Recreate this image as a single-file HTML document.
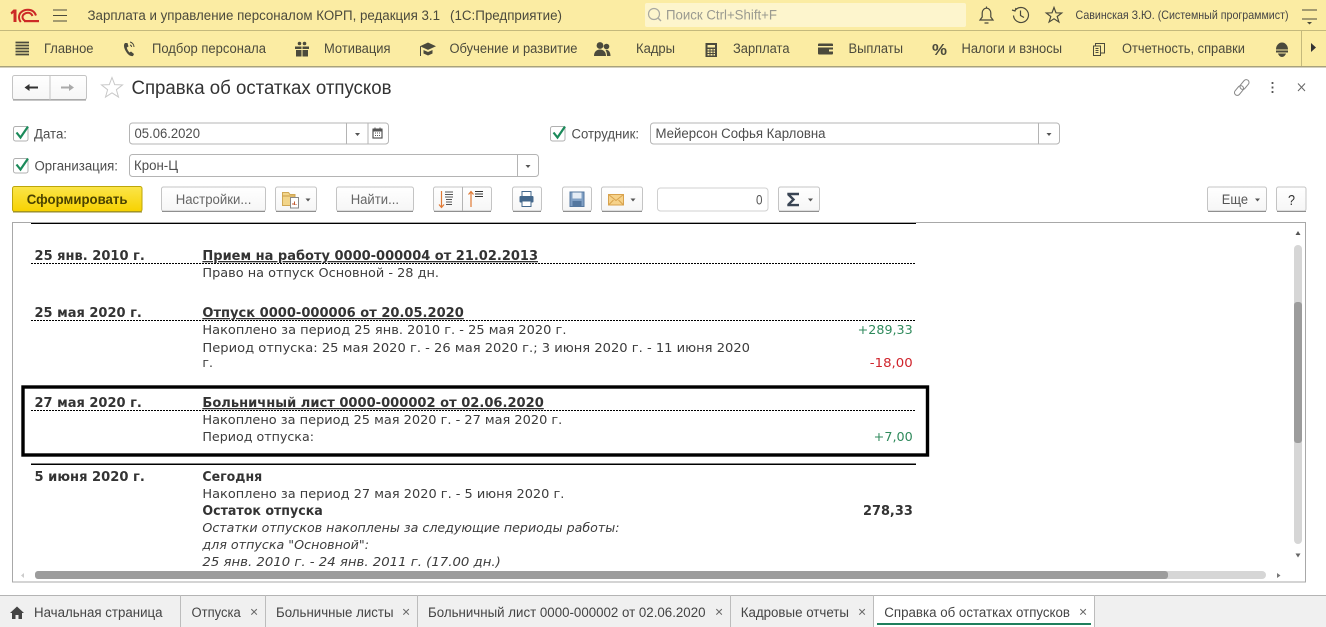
<!DOCTYPE html>
<html lang="ru">
<head>
<meta charset="utf-8">
<title>Справка об остатках отпусков</title>
<style>
html,body{margin:0;padding:0;background:#fff;width:1326px;height:627px;overflow:hidden}
svg{display:block}
text{font-family:"Liberation Sans",sans-serif;font-size:13px;fill:#4a4a40}
.m{font-size:13.5px;fill:#4b4a3c}
.c{font-size:13.5px;fill:#4d4d4d}
.r{font-family:"DejaVu Sans",sans-serif;font-size:12.5px;fill:#3c3c3c}
.b{font-family:"DejaVu Sans",sans-serif;font-size:13px;font-weight:bold;fill:#333}
.u{text-decoration:underline}
.i{font-style:italic}
.t{font-size:13.5px;fill:#444}
.x{font-size:14px;fill:#666}
.btn{fill:url(#g);stroke:#c4c4c4;stroke-width:1}
.sh{stroke:#8f8f8f;stroke-width:1;fill:none}
.fld{fill:#fff;stroke:#b4b4b4;stroke-width:1}
.sep{stroke:#b4b4b4;stroke-width:1}
.dot{stroke:#000;stroke-width:1;stroke-dasharray:2 1;fill:none}
.ar{fill:#555}
.ic{fill:none;stroke:#4b4a3c;stroke-width:1.2}
.if{fill:#4b4a3c}
</style>
</head>
<body>
<svg xmlns="http://www.w3.org/2000/svg" width="1326" height="627" viewBox="0 0 1326 627">
<defs>
<linearGradient id="g" x1="0" y1="0" x2="0" y2="1"><stop offset="0" stop-color="#fff"/><stop offset="1" stop-color="#f6f6f6"/></linearGradient>
<linearGradient id="y" x1="0" y1="0" x2="0" y2="1"><stop offset="0" stop-color="#fbe54a"/><stop offset="1" stop-color="#f7d200"/></linearGradient>
<clipPath id="rep"><rect x="13" y="223" width="1292" height="348"/></clipPath>
</defs>

<!-- top bar -->
<rect x="0" y="0" width="1326" height="30" fill="#fbeca3"/>
<rect x="0" y="30" width="1326" height="1" fill="#c4b97c"/>
<rect x="0" y="31" width="1326" height="35" fill="#fbeca3"/>
<rect x="0" y="66" width="1326" height="1.5" fill="#a8a27c"/>

<!-- 1C logo -->
<path d="M10.500 12.500l3-3h3V22h-3V13l-2 1.500z" fill="#cc2a26"/>
<path d="M36 15.500C34.500 11.500 31.500 9.800 28 9.800c-5 0-9 3-9 7.200 0 1.800.6 3.600 1.800 5M32.500 16C31.500 13.800 30 12.800 28 12.800c-3 0-5.500 1.900-5.500 4.200 0 1.800 1 3 2.500 3.800" fill="none" stroke="#cc2a26" stroke-width="2"/>
<rect x="24" y="20" width="15" height="2.200" fill="#cc2a26"/>
<path d="M53 10h14M53 15.500h14M53 21h14" stroke="#4b4a3c" stroke-width="1.100" fill="none"/>
<text class="m" x="87.500" y="20" textLength="352.500" lengthAdjust="spacingAndGlyphs">Зарплата и управление персоналом КОРП, редакция 3.1</text>
<text class="m" x="450" y="20" textLength="112" lengthAdjust="spacingAndGlyphs">(1С:Предприятие)</text>

<!-- search -->
<rect x="645" y="3" width="321" height="24" rx="2" fill="#fdf5cd"/>
<circle cx="654" cy="14" r="5.500" fill="none" stroke="#a9a9a0" stroke-width="1.200"/>
<path d="M658 18l3 3" stroke="#a9a9a0" stroke-width="1.400"/>
<text x="666" y="19.500" textLength="111" lengthAdjust="spacingAndGlyphs" style="font-size:13.5px;fill:#9a9a90">Поиск Ctrl+Shift+F</text>

<!-- bell, history, star -->
<path class="ic" d="M980 20h13l-2.200-3V13c0-2.600-1.900-4.800-4.300-4.800S982.200 10.400 982.200 13v4zM986.500 8.200V6.500M984.500 23h4"/>
<path class="ic" d="M1015 10.500a7.500 7.500 0 1 1-1.500 5M1012 10l3 1 1-3M1020.500 10.500V15.500l3.500 2"/>
<path class="ic" d="M1054 7.500l2 5.300 5.700.2-4.500 3.500 1.700 5.500-4.900-3.200-4.900 3.200 1.700-5.500-4.500-3.500 5.700-.2z"/>
<text x="1075.500" y="19" textLength="213" lengthAdjust="spacingAndGlyphs" style="font-size:12px;fill:#444">Савинская З.Ю. (Системный программист)</text>
<path d="M1302 10h15M1302 19h15" stroke="#4b4a3c" stroke-width="1.100" fill="none"/>
<path d="M1307 22h5l-2.500 2.500z" fill="#4b4a3c"/>

<!-- menu bar -->
<path d="M15.500 42.500h13.500M15.500 45.500h13.500M15.500 48.500h13.500M15.500 51.500h13.500M15.500 54.500h13.500" stroke="#4b4a3c" stroke-width="1.800" fill="none"/>
<text class="m" x="44" y="53" textLength="49.500" lengthAdjust="spacingAndGlyphs">Главное</text>
<path d="M125 43c-2 2-1 6 2 10 2 2.500 4 3.500 6 3l1-2-3-2.500-1.500 1c-1.500-1.500-2.500-3.500-2.700-5l1.700-1-1-3.500z" class="if"/>
<path d="M130 42a5 5 0 0 1 4 5M130 45a2 2 0 0 1 1.500 2" fill="none" stroke="#4b4a3c" stroke-width="1"/>
<text class="m" x="152" y="53" textLength="114" lengthAdjust="spacingAndGlyphs">Подбор персонала</text>
<path class="if" d="M295 46.500h6.500V49H295zM302.500 46.500h6.500V49h-6.500zM296 50h5.500v6.500H296zM302.500 50H308v6.500h-5.500z"/>
<circle cx="299.500" cy="43.500" r="1.800" class="if"/><circle cx="304.500" cy="43.500" r="1.800" class="if"/>
<text class="m" x="324" y="53" textLength="66.500" lengthAdjust="spacingAndGlyphs">Мотивация</text>
<path class="if" d="M428 42.500l8 3.700-8 3.700-8-3.700zM423.500 50l4.500 2 4.500-2v3.500l-4.500 2-4.500-2z"/>
<path d="M420.500 46.500v9.500" stroke="#4b4a3c" stroke-width="1"/>
<text class="m" x="449.500" y="53" textLength="128" lengthAdjust="spacingAndGlyphs">Обучение и развитие</text>
<circle cx="600" cy="45.500" r="3.400" class="if"/><circle cx="606.500" cy="46.500" r="2.800" class="if"/>
<path class="if" d="M594 56c0-4 2.500-6.500 6-6.500s6 2.500 6 6.500zM607 56c0-2.500-.5-4.500-1.500-6 3-.8 5 2 5 6z"/>
<text class="m" x="636" y="53" textLength="39" lengthAdjust="spacingAndGlyphs">Кадры</text>
<rect x="705.500" y="43" width="11.500" height="14" class="if"/>
<rect x="707.500" y="45" width="7.500" height="2.500" fill="#fbeca3"/>
<path d="M707.500 49h2v1.500h-2zM710.500 49h2v1.500h-2zM713.500 49h1.500v1.500h-1.500zM707.500 51.500h2V53h-2zM710.500 51.500h2V53h-2zM713.500 51.500h1.500V53h-1.500zM707.500 54h2v1.500h-2zM710.500 54h2v1.500h-2zM713.500 54h1.500v1.500h-1.500z" fill="#fbeca3"/>
<text class="m" x="733" y="53" textLength="56.500" lengthAdjust="spacingAndGlyphs">Зарплата</text>
<rect x="818" y="43.500" width="15" height="11" rx="1" class="if"/>
<rect x="818" y="46" width="15" height="1.500" fill="#fbeca3"/>
<rect x="829" y="49.500" width="4" height="2" fill="#fbeca3"/>
<text class="m" x="848.500" y="53" textLength="54.500" lengthAdjust="spacingAndGlyphs">Выплаты</text>
<text x="932" y="55" style="font-size:16px;font-weight:bold;fill:#4b4a3c" textLength="15" lengthAdjust="spacingAndGlyphs">%</text>
<text class="m" x="961.500" y="53" textLength="100.500" lengthAdjust="spacingAndGlyphs">Налоги и взносы</text>
<path class="ic" d="M1093.500 46h7v9.500h-7zM1095.500 46V43.500h9v9.500h-4M1095.500 48.500h3M1095.500 50.500h3M1095.500 52.500h3" style="stroke-width:1"/>
<text class="m" x="1122" y="53" textLength="123" lengthAdjust="spacingAndGlyphs">Отчетность, справки</text>
<path class="if" d="M1276 49.500c0-3.800 2.500-7 6-7s6 3.200 6 7zM1276 50.500h12v2h-12zM1278 53.500h8c-.7 2-2.200 3.500-4 3.500s-3.300-1.500-4-3.500z"/>
<rect x="1301" y="31" width="1" height="35" fill="#c4b97c"/>
<path d="M1311 43l5 4.500-5 4.500z" fill="#333"/>

<!-- title row -->
<rect x="12.500" y="75.500" width="74" height="24" rx="2" class="btn"/>
<path class="sh" d="M13 100h73"/>
<rect x="49.500" y="76" width="1" height="24" fill="#c4c4c4"/>
<path d="M24.500 87.500l5-3.500v2.500H38v2h-8.500V91z" fill="#333"/>
<path d="M74 87.500l-5-3.500v2.500H61v2h8V91z" fill="#aaa"/>
<path d="M112 77.500l2.700 7.100 7.800.3-6.100 4.800 2.100 7.400-6.500-4.300-6.500 4.300 2.100-7.400-6.100-4.800 7.800-.3z" fill="none" stroke="#c8c8c8" stroke-width="1"/>
<text x="131.500" y="94" textLength="260" lengthAdjust="spacingAndGlyphs" style="font-size:19px;fill:#333">Справка об остатках отпусков</text>
<g fill="none" stroke="#888" stroke-width="1">
<rect x="-5.500" y="-2.800" width="11" height="5.600" rx="2.800" transform="translate(1244.500 84.500) rotate(-50)"/>
<rect x="-5.500" y="-2.800" width="11" height="5.600" rx="2.800" transform="translate(1239 90.500) rotate(-50)"/>
</g>
<path d="M1272.500 82v2M1272.500 86.500v2M1272.500 91v2" stroke="#555" stroke-width="1.800" fill="none"/>
<path d="M1298 83.500l7 7.500M1305 83.500l-7 7.500" stroke="#666" stroke-width="1"/>

<!-- filter form -->
<rect x="13.500" y="126.500" width="14.500" height="14.500" rx="2" fill="#fff" stroke="#b0b0b0"/>
<path d="M16.500 132.500l4 5 7.500-11" fill="none" stroke="#1b8a5a" stroke-width="2.200"/>
<text class="c" x="34" y="138.500" textLength="33" lengthAdjust="spacingAndGlyphs">Дата:</text>
<rect x="129.500" y="123" width="259" height="21" rx="3" class="fld"/>
<path class="sep" d="M346.500 123v21M368 123v21"/>
<text class="c" x="134.500" y="138" textLength="65.500" lengthAdjust="spacingAndGlyphs">05.06.2020</text>
<path class="ar" d="M355 133h5l-2.500 3z"/>
<rect x="373" y="130" width="9" height="8" fill="none" stroke="#555" stroke-width="1.200"/>
<path d="M373 129h9v2h-9zM375 127.500v2M380 127.500v2M375 133h1M377 133h1M379 133h1M375 135.500h1M377 135.500h1M379 135.500h1" stroke="#555" fill="none" stroke-width="1"/>

<rect x="550.500" y="126.500" width="14.500" height="14.500" rx="2" fill="#fff" stroke="#b0b0b0"/>
<path d="M553.500 132.500l4 5 7.500-11" fill="none" stroke="#1b8a5a" stroke-width="2.200"/>
<text class="c" x="571.500" y="138.500" textLength="67.500" lengthAdjust="spacingAndGlyphs">Сотрудник:</text>
<rect x="650.500" y="123" width="409" height="21" rx="3" class="fld"/>
<path class="sep" d="M1038.500 123v21"/>
<text class="c" x="655.500" y="138" textLength="170" lengthAdjust="spacingAndGlyphs">Мейерсон Софья Карловна</text>
<path class="ar" d="M1046.500 133h5l-2.500 3z"/>

<rect x="13.500" y="158.500" width="14.500" height="14.500" rx="2" fill="#fff" stroke="#b0b0b0"/>
<path d="M16.500 164.500l4 5 7.500-11" fill="none" stroke="#1b8a5a" stroke-width="2.200"/>
<text class="c" x="34.500" y="170.500" textLength="83.500" lengthAdjust="spacingAndGlyphs">Организация:</text>
<rect x="129.500" y="154.500" width="409" height="22" rx="3" class="fld"/>
<path class="sep" d="M517.500 155v21"/>
<text class="c" x="134" y="170" textLength="44" lengthAdjust="spacingAndGlyphs">Крон-Ц</text>
<path class="ar" d="M525.500 165h5l-2.500 3z"/>

<!-- command bar -->
<rect x="12.500" y="186.500" width="129.500" height="25" rx="2" fill="url(#y)" stroke="#bda60a"/>
<path d="M13 212h129" stroke="#8f8730"/>
<text x="26.800" y="204" textLength="100.700" lengthAdjust="spacingAndGlyphs" style="font-size:13.500px;font-weight:bold;fill:#4a4200">Сформировать</text>

<rect x="161.500" y="187" width="104" height="24" rx="2" class="btn"/><path class="sh" d="M162 211.500h103"/>
<text class="c" x="175.700" y="204" textLength="75.700" lengthAdjust="spacingAndGlyphs" style="fill:#666">Настройки...</text>

<rect x="275.500" y="187" width="41" height="24" rx="2" class="btn"/><path class="sh" d="M276 211.500h40"/>
<path d="M282.500 192.500h6l1.500 2h5v11h-12.500z" fill="#f2d58a" stroke="#d0a855"/>
<path d="M282.500 196h12.500" stroke="#c99a45"/>
<rect x="290.500" y="197.500" width="8" height="10.500" fill="#fff" stroke="#888"/>
<path d="M293 205v-2M294.500 205v-3.500M296 205v-1" stroke="#c05a30"/>
<path class="ar" d="M305.500 198.500h5l-2.500 3z"/>

<rect x="336.500" y="187" width="77" height="24" rx="2" class="btn"/><path class="sh" d="M337 211.500h76"/>
<text class="c" x="350.700" y="204" textLength="48.300" lengthAdjust="spacingAndGlyphs" style="fill:#666">Найти...</text>

<rect x="433.500" y="187" width="58" height="24" rx="2" class="btn"/><path class="sh" d="M434 211.500h57"/>
<path class="sep" d="M462.500 187v24"/>
<path d="M441.500 191v16M439 204.500l2.500 3 2.500-3" fill="none" stroke="#e07a35" stroke-width="1.200"/>
<path d="M445 192h8M445 194.500h8M445 197h8M446 199.500h6M446 202h6M446 204.500h6" stroke="#555" stroke-width="1"/>
<path d="M471 207v-15M468.500 194.500l2.500-3 2.500 3" fill="none" stroke="#e07a35" stroke-width="1.200"/>
<path d="M475 191.500h8M475 194h8M475 196.500h8" stroke="#333" stroke-width="1"/>

<rect x="512.500" y="187" width="29" height="24" rx="2" class="btn"/><path class="sh" d="M513 211.500h28"/>
<rect x="522" y="191.500" width="9" height="5" fill="#fff" stroke="#44688c"/>
<rect x="519.500" y="196" width="14" height="6.500" rx="1" fill="#44688c"/>
<rect x="522" y="201" width="9" height="5.500" fill="#fff" stroke="#44688c"/>

<rect x="562.500" y="187" width="29" height="24" rx="2" class="btn"/><path class="sh" d="M563 211.500h28"/>
<rect x="570" y="192" width="14" height="14.500" fill="#7f9fc4" stroke="#54779f"/>
<rect x="572.500" y="192.500" width="9" height="6" fill="#e4ecf5"/>
<rect x="572.500" y="201" width="9" height="5.500" fill="#54779f"/>

<rect x="601.500" y="187" width="41" height="24" rx="2" class="btn"/><path class="sh" d="M602 211.500h40"/>
<rect x="608.500" y="194.500" width="15" height="10.500" fill="#f6d28a" stroke="#d8a24d"/>
<path d="M608.500 194.500l7.500 6 7.500-6M608.500 205l5-5M623.500 205l-5-5" fill="none" stroke="#d8a24d"/>
<path class="ar" d="M630.500 198.500h5l-2.500 3z"/>

<rect x="657.500" y="188" width="110.500" height="23" rx="3" fill="#fff" stroke="#d0d0d0"/>
<text x="756" y="204.500" textLength="6.500" lengthAdjust="spacingAndGlyphs" style="font-size:14px;fill:#555">0</text>

<rect x="778.500" y="187" width="41" height="24" rx="2" class="btn"/><path class="sh" d="M779 211.500h40"/>
<path d="M799 194h-10.500v.6l5 4.900-5 5v.6H799" fill="none" stroke="#3a4554" stroke-width="2.400"/>
<path class="ar" d="M808 198.500h5l-2.500 3z"/>

<rect x="1207.500" y="187" width="59" height="24" rx="2" class="btn"/><path class="sh" d="M1208 211.500h58"/>
<text class="c" x="1221.800" y="204" textLength="26.200" lengthAdjust="spacingAndGlyphs" style="fill:#555">Еще</text>
<path class="ar" d="M1255 198.500h5l-2.500 3z"/>
<rect x="1276.500" y="187" width="29.500" height="24" rx="2" class="btn"/><path class="sh" d="M1277 211.500h29"/>
<text x="1288" y="205" textLength="7" lengthAdjust="spacingAndGlyphs" style="font-size:15px;fill:#333">?</text>

<!-- report frame -->
<rect x="12.500" y="222.500" width="1293" height="359.500" fill="#fff" stroke="#a8a8a8"/>
<g clip-path="url(#rep)">
<rect x="31" y="222" width="885" height="2" fill="#000"/>

<text class="b" x="34.500" y="260" textLength="110.300" lengthAdjust="spacingAndGlyphs">25 янв. 2010 г.</text>
<text class="b u" x="202.400" y="260" textLength="335.600" lengthAdjust="spacingAndGlyphs">Прием на работу 0000-000004 от 21.02.2013</text>
<path class="dot" d="M31 263.500h885"/>
<text class="r" x="202.400" y="277" textLength="236.600" lengthAdjust="spacingAndGlyphs">Право на отпуск Основной - 28 дн.</text>

<text class="b" x="34.500" y="317" textLength="107.300" lengthAdjust="spacingAndGlyphs">25 мая 2020 г.</text>
<text class="b u" x="202.400" y="317" textLength="261.400" lengthAdjust="spacingAndGlyphs">Отпуск 0000-000006 от 20.05.2020</text>
<path class="dot" d="M31 320.500h885"/>
<text class="r" x="202.400" y="334" textLength="364.100" lengthAdjust="spacingAndGlyphs">Накоплено за период 25 янв. 2010 г. - 25 мая 2020 г.</text>
<text class="r" x="857.700" y="334" textLength="55" lengthAdjust="spacingAndGlyphs" style="fill:#2f8a5c">+289,33</text>
<text class="r" x="202.400" y="352" textLength="547.600" lengthAdjust="spacingAndGlyphs">Период отпуска: 25 мая 2020 г. - 26 мая 2020 г.; 3 июня 2020 г. - 11 июня 2020</text>
<text class="r" x="202.400" y="367">г.</text>
<text class="r" x="869.800" y="367" textLength="42.900" lengthAdjust="spacingAndGlyphs" style="fill:#d0242c">-18,00</text>

<text class="b" x="34.500" y="407" textLength="107.300" lengthAdjust="spacingAndGlyphs">27 мая 2020 г.</text>
<text class="b u" x="202.400" y="407" textLength="341.400" lengthAdjust="spacingAndGlyphs">Больничный лист 0000-000002 от 02.06.2020</text>
<path class="dot" d="M31 410.500h885"/>
<text class="r" x="202.400" y="424" textLength="359.900" lengthAdjust="spacingAndGlyphs">Накоплено за период 25 мая 2020 г. - 27 мая 2020 г.</text>
<text class="r" x="202.400" y="441" textLength="111.600" lengthAdjust="spacingAndGlyphs">Период отпуска:</text>
<text class="r" x="873.700" y="441" textLength="39.100" lengthAdjust="spacingAndGlyphs" style="fill:#2f8a5c">+7,00</text>
<rect x="23" y="387" width="904.500" height="68" fill="none" stroke="#000" stroke-width="3.400"/>

<rect x="31" y="463.500" width="885" height="1.500" fill="#000"/>
<text class="b" x="34.500" y="481" textLength="110.300" lengthAdjust="spacingAndGlyphs">5 июня 2020 г.</text>
<text class="b" x="202.400" y="481" textLength="59.800" lengthAdjust="spacingAndGlyphs">Сегодня</text>
<text class="r" x="202.400" y="498" textLength="362" lengthAdjust="spacingAndGlyphs">Накоплено за период 27 мая 2020 г. - 5 июня 2020 г.</text>
<text class="b" x="202.400" y="515" textLength="120.400" lengthAdjust="spacingAndGlyphs">Остаток отпуска</text>
<text class="b" x="863" y="515" textLength="49.800" lengthAdjust="spacingAndGlyphs">278,33</text>
<text class="r i" x="202.400" y="532" textLength="417.100" lengthAdjust="spacingAndGlyphs">Остатки отпусков накоплены за следующие периоды работы:</text>
<text class="r i" x="202.400" y="549" textLength="166.600" lengthAdjust="spacingAndGlyphs">для отпуска "Основной":</text>
<text class="r i" x="202.400" y="566" textLength="298.400" lengthAdjust="spacingAndGlyphs">25 янв. 2010 г. - 24 янв. 2011 г. (17.00 дн.)</text>
</g>

<!-- scrollbars -->
<rect x="1294" y="245" width="8" height="299" rx="4" fill="#d6d6d6"/>
<rect x="1294" y="302" width="8" height="141" rx="3" fill="#9c9c9c"/>
<path d="M1295.500 235l2.500-4 2.500 4z" fill="#555"/>
<path d="M1295.500 553.500l2.500 4 2.500-4z" fill="#666"/>
<rect x="35" y="571" width="1231" height="8" rx="4" fill="#d6d6d6"/>
<rect x="35" y="571" width="1133" height="8" rx="3" fill="#9c9c9c"/>
<path d="M24 573l-3 2.500 3 2.500z" fill="#ccc"/>
<path d="M1277 573l3.500 2.500-3.500 2.500z" fill="#777"/>

<!-- tab bar -->
<rect x="0" y="595" width="1326" height="32" fill="#f0f0f0"/>
<rect x="0" y="595" width="1326" height="1" fill="#b4b4b4"/>
<rect x="874" y="596" width="221" height="31" fill="#fff"/>
<path d="M180.500 595v32M265.500 595v32M417.500 595v32M730.500 595v32M873.500 595v32M1094.500 595v32" stroke="#bcbcbc" fill="none"/>
<path d="M10 613l7-6.500 7 6.500h-2v6h-3.500v-4h-3v4H12v-6z" fill="#444"/>
<text class="t" x="34" y="617" textLength="128.500" lengthAdjust="spacingAndGlyphs">Начальная страница</text>
<text class="t" x="191.500" y="617" textLength="49.200" lengthAdjust="spacingAndGlyphs">Отпуска</text>
<text class="x" x="250" y="616.500">×</text>
<text class="t" x="276" y="617" textLength="117.500" lengthAdjust="spacingAndGlyphs">Больничные листы</text>
<text class="x" x="402" y="616.500">×</text>
<text class="t" x="428" y="617" textLength="277.500" lengthAdjust="spacingAndGlyphs">Больничный лист 0000-000002 от 02.06.2020</text>
<text class="x" x="715" y="616.500">×</text>
<text class="t" x="740.700" y="617" textLength="108.300" lengthAdjust="spacingAndGlyphs">Кадровые отчеты</text>
<text class="x" x="858" y="616.500">×</text>
<text class="t" x="884.300" y="617" textLength="185.700" lengthAdjust="spacingAndGlyphs">Справка об остатках отпусков</text>
<text class="x" x="1079" y="616.500">×</text>
<rect x="877" y="623" width="214" height="2" fill="#1f7f5c"/>
</svg>
</body>
</html>
